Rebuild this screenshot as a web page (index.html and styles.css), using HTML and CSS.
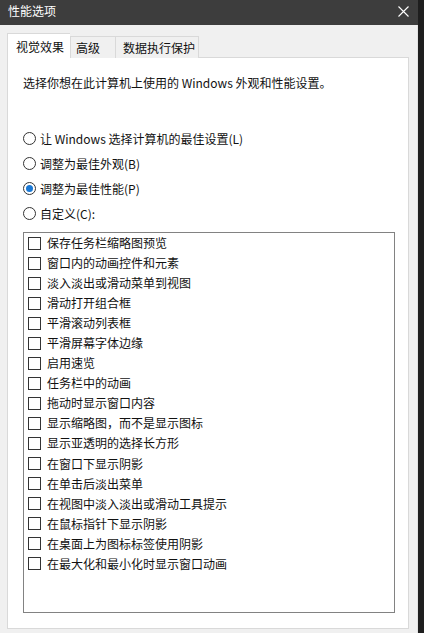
FILE: index.html
```html
<!DOCTYPE html>
<html lang="zh-CN">
<head>
<meta charset="utf-8">
<title>性能选项</title>
<link rel="stylesheet" href="styles.css">
</head>
<body>
<div class="screen">
  <div class="dialog">
    <div class="titlebar">
      <span class="title">性能选项</span>
      <svg class="close" width="11" height="11" viewBox="0 0 11 11"><path d="M0.5 0.5 L10.5 10.5 M10.5 0.5 L0.5 10.5" stroke="#ffffff" stroke-width="1.1" fill="none"/></svg>
    </div>
    <div class="body">
      <div class="tabs">
        <div class="tab active">视觉效果</div>
        <div class="tab t2">高级</div>
        <div class="tab t3">数据执行保护</div>
      </div>
      <div class="panel">
        <p class="desc">选择你想在此计算机上使用的 Windows 外观和性能设置。</p>
        <div class="radios">
          <div class="radio"><span class="dot"></span>让 Windows 选择计算机的最佳设置(L)</div>
          <div class="radio"><span class="dot"></span>调整为最佳外观(B)</div>
          <div class="radio"><span class="dot on"></span>调整为最佳性能(P)</div>
          <div class="radio"><span class="dot"></span>自定义(C):</div>
        </div>
        <div class="list">
          <div class="check"><span class="box"></span>保存任务栏缩略图预览</div>
          <div class="check"><span class="box"></span>窗口内的动画控件和元素</div>
          <div class="check"><span class="box"></span>淡入淡出或滑动菜单到视图</div>
          <div class="check"><span class="box"></span>滑动打开组合框</div>
          <div class="check"><span class="box"></span>平滑滚动列表框</div>
          <div class="check"><span class="box"></span>平滑屏幕字体边缘</div>
          <div class="check"><span class="box"></span>启用速览</div>
          <div class="check"><span class="box"></span>任务栏中的动画</div>
          <div class="check"><span class="box"></span>拖动时显示窗口内容</div>
          <div class="check"><span class="box"></span>显示缩略图，而不是显示图标</div>
          <div class="check"><span class="box"></span>显示亚透明的选择长方形</div>
          <div class="check"><span class="box"></span>在窗口下显示阴影</div>
          <div class="check"><span class="box"></span>在单击后淡出菜单</div>
          <div class="check"><span class="box"></span>在视图中淡入淡出或滑动工具提示</div>
          <div class="check"><span class="box"></span>在鼠标指针下显示阴影</div>
          <div class="check"><span class="box"></span>在桌面上为图标标签使用阴影</div>
          <div class="check"><span class="box"></span>在最大化和最小化时显示窗口动画</div>
        </div>
      </div>
    </div>
  </div>
</div>
</body>
</html>
```

FILE: styles.css
```css
* { box-sizing: border-box; }
html, body { margin: 0; padding: 0; }
body {
  width: 424px;
  height: 633px;
  overflow: hidden;
  font-family: "Noto Sans CJK SC", "Noto Sans", sans-serif;
  font-size: 12px;
  color: #111;
}
.screen {
  display: flex;
  width: 424px;
  height: 633px;
  background: #1e1e1e;
}
.dialog {
  width: 418px;
  display: flex;
  flex-direction: column;
  background: #f0f0f0;
}
.titlebar {
  height: 25px;
  background: #3d3d3d;
  display: flex;
  align-items: center;
  justify-content: space-between;
  padding: 0 9px 3px 8px;
}
.title {
  color: #ffffff;
  font-size: 12px;
  line-height: 16px;
}
.close { display: block; margin-top: 1px; }
.body {
  flex: 1;
  display: flex;
  flex-direction: column;
  padding: 8px 8px 4px 7px;
  border-right: 1px solid #e2e2e2;
}
.tabs {
  display: flex;
  align-items: flex-end;
  height: 25px;
  position: relative;
  z-index: 1;
  margin-bottom: -1px;
}
.tab {
  height: 22px;
  border: 1px solid #d9d9d9;
  border-bottom: none;
  background: #f0f0f0;
  line-height: 20px;
  padding-left: 5px;
  color: #111;
}
.tab.active {
  width: 63px;
  height: 25px;
  background: #ffffff;
  padding-left: 8px;
  line-height: 26px;
  border-right: none;
}
.tab.t2 { width: 45px; border-right: none; padding-left: 5px; line-height: 22px; }
.tab.t3 { width: 84px; padding-left: 7px; line-height: 22px; }
.panel {
  flex: 1;
  background: #ffffff;
  border: 1px solid #d9d9d9;
  padding: 15px 13px 15px 15px;
  display: flex;
  flex-direction: column;
}
.desc {
  margin: 0;
  line-height: 20px;
  color: #111;
}
.radios {
  margin-top: 33px;
  display: flex;
  flex-direction: column;
}
.radio {
  height: 25px;
  display: flex;
  align-items: center;
  line-height: 25px;
}
.dot {
  width: 13px;
  height: 13px;
  border: 1px solid #333;
  border-radius: 50%;
  margin-right: 4px;
  display: flex;
  align-items: center;
  justify-content: center;
  flex: none;
}
.dot.on::after {
  content: "";
  width: 7px;
  height: 7px;
  border-radius: 50%;
  background: #1a78d4;
}
.list {
  margin-top: 6px;
  flex: 1;
  border: 1px solid #828282;
  padding-left: 4px;
  margin-bottom: 0;
}
.check {
  height: 20.05px;
  display: flex;
  align-items: center;
  line-height: 20px;
}
.box {
  width: 13px;
  height: 13px;
  border: 1px solid #333;
  margin-right: 6px;
  flex: none;
}
```
